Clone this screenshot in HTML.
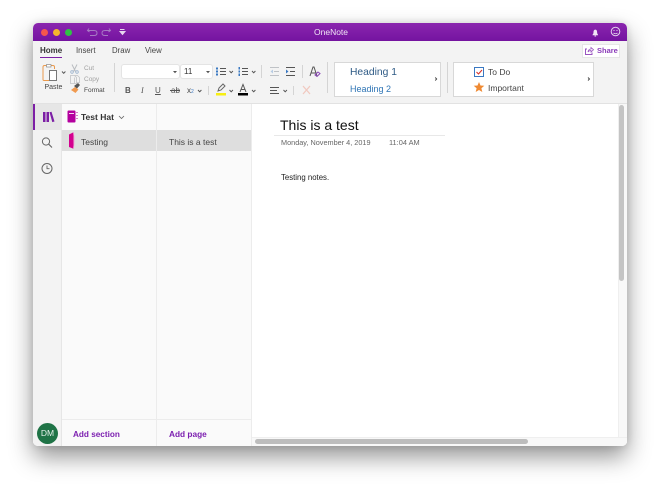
<!DOCTYPE html>
<html><head><meta charset="utf-8"><style>
html,body{margin:0;padding:0;width:660px;height:490px;overflow:hidden;background:#fff}
body{font-family:"Liberation Sans",sans-serif;position:relative}
#w{position:absolute;left:0;top:0;width:660px;height:490px;filter:blur(.3px)}
.a,.t{position:absolute}
.t{white-space:nowrap;line-height:12px;color:#444}
svg{position:absolute;overflow:visible}
</style></head><body><div id="w">
<div class="a" style="left:33px;top:23px;width:594px;height:423px;border-radius:5px;box-shadow:0 11px 24px rgba(0,0,0,.42),0 0 9px rgba(0,0,0,.12)"></div>
<div class="a" style="left:33px;top:23px;width:594px;height:423px;border-radius:5px;overflow:hidden;background:#fff">
<div class="a" style="left:0;top:0;width:594px;height:18px;background:linear-gradient(#8a25ae,#7413a0)"></div>
<div class="a" style="left:0;top:18px;width:594px;height:62px;background:#f3f3f3;border-bottom:1px solid #e2e2e2"></div>
<div class="a" style="left:0;top:81px;width:28px;height:342px;background:#f3f3f3;border-right:1px solid #e6e6e6"></div>
<div class="a" style="left:29px;top:81px;width:189px;height:342px;background:#fafafa"></div>
<div class="a" style="left:123px;top:81px;width:1px;height:342px;background:#ececec"></div>
<div class="a" style="left:218px;top:81px;width:1px;height:342px;background:#ececec"></div>
<div class="a" style="left:29px;top:396px;width:189px;height:1px;background:#ececec"></div>
<div class="a" style="left:0;top:81px;width:28px;height:26px;background:#e6e6e6"></div>
<div class="a" style="left:0;top:81px;width:2px;height:26px;background:#7c1fa5"></div>
<div class="a" style="left:29px;top:107px;width:94px;height:21px;background:#dedede"></div>
<div class="a" style="left:124px;top:107px;width:94px;height:21px;background:#dedede"></div>
<div class="a" style="left:585px;top:81px;width:9px;height:342px;background:#f8f8f8;border-left:1px solid #efefef;box-sizing:border-box"></div>
<div class="a" style="left:219px;top:414px;width:375px;height:9px;background:#f8f8f8;border-top:1px solid #efefef;box-sizing:border-box"></div>
<div class="a" style="left:586px;top:82px;width:5px;height:176px;background:#c4c4c4;border-radius:3px"></div>
<div class="a" style="left:222px;top:416px;width:273px;height:5px;background:#bdbdbd;border-radius:3px"></div>
</div>

<div class="a" style="left:41px;top:29px;width:7px;height:7px;border-radius:50%;background:#f4564d"></div>
<div class="a" style="left:53px;top:29px;width:7px;height:7px;border-radius:50%;background:#f5b42c"></div>
<div class="a" style="left:65px;top:29px;width:7px;height:7px;border-radius:50%;background:#2fc244"></div>

<div class="a" style="left:581.500px;top:44px;width:38.500px;height:13.500px;background:#fff;border:1px solid #e6e6e6;box-sizing:border-box"></div>
<div class="a" style="left:122px;top:65px;width:57px;height:13px;background:#fff;border-radius:2px;box-shadow:0 0 0 1px #e4e4e4"></div>
<div class="a" style="left:181px;top:65px;width:31px;height:13px;background:#fff;border-radius:2px;box-shadow:0 0 0 1px #e4e4e4"></div>
<div class="a" style="left:334px;top:62px;width:107px;height:35px;background:#fff;border:1px solid #d8d8d8;box-sizing:border-box"></div>
<div class="a" style="left:453px;top:62px;width:141px;height:35px;background:#fff;border:1px solid #d8d8d8;box-sizing:border-box"></div>

<svg style="left:0;top:0" width="660" height="490" fill="none">
<path d="M89 28.500 L87.500 30.500 L89.500 32 M88 30.500 H94 Q97 30.500 97 33 Q97 35.500 94 35.500 H90" stroke="#a77ac4" stroke-width="1"/>
<path d="M109 28.500 L110.500 30.500 L108.500 32 M110 30.500 H105 Q102 30.500 102 33 Q102 35.500 105 35.500 H108" stroke="#a77ac4" stroke-width="1"/>
<path d="M120 29.500h4.500M120 31.500h5l-2.500 3z" stroke="#e6d6ee" stroke-width="1" fill="#e6d6ee"/>
<path d="M592.500 35.200c0-1 1-.8 1-3.200 0-1.500 .8-2.400 1.800-2.400s1.800 .9 1.800 2.400c0 2.400 1 2.200 1 3.200z" fill="#f1e6f5"/><rect x="594.500" y="35.500" width="1.600" height="1" fill="#f1e6f5"/>
<circle cx="615.500" cy="31.500" r="4.300" stroke="#e3d2ec" stroke-width="1"/><circle cx="614" cy="30.500" r=".6" fill="#e3d2ec"/><circle cx="617" cy="30.500" r=".6" fill="#e3d2ec"/><path d="M613.500 33q2 1.500 4 0" stroke="#e3d2ec" stroke-width=".8"/>

<!-- separators -->
<path d="M114.500 63v29M261.500 65v13M302.500 65v13M327.500 62v31M447.500 62v31M208.500 86v9M293.500 86v9" stroke="#d4d4d4"/>
<!-- paste -->
<path d="M48 65.500h-3.500q-1.500 0-1.500 1.500v12.500q0 1 1 1h5" stroke="#ea9a4d" stroke-width="1"/>
<path d="M50 65.500h3q1.500 0 1.500 1.500v2" stroke="#ea9a4d" stroke-width="1"/>
<rect x="46.500" y="64.500" width="4.500" height="2.500" fill="#fff" stroke="#8a8a8a" stroke-width=".7"/>
<rect x="49.500" y="70.500" width="7" height="10" fill="#fff" stroke="#777" stroke-width="1"/>
<path d="M62 71.500l1.700 1.800 1.700-1.800" stroke="#555" stroke-width="1"/>
<!-- cut -->
<path d="M72 64.500l3.500 7M77 64.500l-3.500 7" stroke="#b9bcc0" stroke-width="1"/><circle cx="72" cy="72" r="1.300" stroke="#9db4cf" stroke-width=".8"/><circle cx="77" cy="72" r="1.300" stroke="#9db4cf" stroke-width=".8"/>
<!-- copy -->
<path d="M70.500 75.500h4l2 2v6h-6z M74.500 77.500v6M74.500 75.500h3l2 2v5h-3" stroke="#c2c4c7" stroke-width=".8"/>
<!-- format -->
<path d="M71 90l4-3 3.500 2.500-3 3.500z" fill="#f09a50"/><path d="M74 86l4-3 2 2-3 3.500z" fill="#555"/>
<!-- select chevrons -->
<path d="M173 71h4l-2 2.200zM206 71h4l-2 2.200z" fill="#555"/>
<!-- bullets -->
<path d="M220 68.500h6M220 71.500h6M220 74.500h6M242 68.500h6M242 71.500h6M242 74.500h6" stroke="#555" stroke-width="1"/>
<g fill="#3a78c2"><rect x="216" y="67.500" width="2" height="2"/><rect x="216" y="70.500" width="2" height="2"/><rect x="216" y="73.500" width="2" height="2"/><rect x="238.500" y="67" width="1.500" height="2.500"/><rect x="238.500" y="70.500" width="1.500" height="2"/><rect x="238.500" y="73.500" width="1.500" height="2.500"/></g>
<path d="M229.500 71l1.700 1.800 1.700-1.800M252 71l1.700 1.800 1.700-1.800M198 90l1.700 1.800 1.700-1.800M229.500 90l1.700 1.800 1.700-1.800M252 90l1.700 1.800 1.700-1.800M283.500 90l1.700 1.800 1.700-1.800" stroke="#555" stroke-width="1"/>
<!-- indent -->
<path d="M270 67.500h9M274 71.500h5M270 75.500h9" stroke="#bfc2c6" stroke-width="1"/><path d="M273 69.500l-2.500 2 2.500 2z" fill="#b7cce4"/>
<path d="M286 67.500h9M290 71.500h5M286 75.500h9" stroke="#555" stroke-width="1"/><path d="M286 69.500l2.500 2-2.500 2z" fill="#3a78c2"/>
<!-- clear format A -->
<path d="M310 76l3-9h1l3 9M311 73h5" stroke="#555" stroke-width="1"/><path d="M315 75l3-3 2 1.500-3 3z" stroke="#8a45b8" stroke-width="1"/>
<!-- B I U row -->
<path d="M170 90.500h10" stroke="#555" stroke-width="1"/>
<rect x="216" y="93" width="10" height="2.500" fill="#f7ee12"/><path d="M218 91l1-3 4-4 2 2-4 4z" stroke="#666" stroke-width="1"/>
<rect x="238" y="93" width="10" height="2.500" fill="#000"/><path d="M240 92l3-7.500 3 7.500M241 89.500h4" stroke="#555" stroke-width="1"/>
<path d="M270 87.500h9M270 90.500h7M270 93.500h9" stroke="#555" stroke-width="1"/>
<path d="M303 86l7 8M310 86l-7 8" stroke="#f1c9c0" stroke-width="1.300"/>
<!-- share -->
<path d="M587 49h-1.500v5.500h6.500v-2" stroke="#9a55c0" stroke-width="1"/><path d="M588 52q.5-3 3-3v-1.500l2.500 2.300-2.500 2.200v-1.500q-2 0-3 1.500z" stroke="#9a55c0" stroke-width=".8"/>
<!-- arrows -->
<path d="M435.200 77.500l1.500 1.500-1.500 1.500M588 77.500l1.500 1.500-1.500 1.500" stroke="#444" stroke-width=".9"/>
<!-- todo -->
<rect x="474.500" y="67.500" width="9" height="9" fill="#fff" stroke="#3a78c2" stroke-width="1"/><path d="M476.500 72l2 2 3.500-4" stroke="#d8322a" stroke-width="1.100"/>
<path d="M479 82l1.500 3.500 3.800.3-2.900 2.500.9 3.700-3.300-2-3.300 2 .9-3.700-2.900-2.500 3.800-.3z" fill="#ef8a33"/>
<!-- rail -->
<path d="M43 112h2.500v10H43zM46.500 112H49v10h-2.500z" fill="#7c1fa5"/><path d="M49.500 112.300l2-.6 3 9.800-2.200.6z" fill="#7c1fa5"/>
<circle cx="46" cy="141.500" r="3.600" stroke="#666" stroke-width="1"/><path d="M48.700 144.200l3.300 3.300" stroke="#666" stroke-width="1.100"/>
<circle cx="47" cy="168.500" r="5" stroke="#666" stroke-width="1"/><path d="M47 165.500v3.200h2.500" stroke="#666" stroke-width=".9"/>
<!-- notebook -->
<rect x="67.500" y="110.500" width="8" height="12" rx="1" fill="#b4009e"/><rect x="69" y="113" width="5" height="1" fill="#f6d5f0"/><path d="M77 112v1M77 115v1M77 118v1" stroke="#b4009e"/>
<path d="M119 116l2.500 2.500 2.500-2.500" stroke="#666" stroke-width=".8"/>
<!-- section tab -->
<path d="M69 134.500l4.500-2.300v16.600l-4.500-1.800z" fill="#d3008f"/><path d="M73.500 132.500q1.200 8 0 16" stroke="#f3a3d9" stroke-width=".8"/>
<path d="M274 135.500h171" stroke="#e8e8e8"/>
</svg>

<div class="t" style="left:314px;top:26px;font-size:8.500px;color:#f0e4f5">OneNote</div>
<div class="t" style="left:40px;top:45px;font-size:8px;font-weight:bold;color:#333">Home</div>
<div class="a" style="left:40px;top:56.500px;width:22px;height:1.500px;background:#7c1fa5"></div>
<div class="t" style="left:76px;top:45px;font-size:7.800px;color:#444">Insert</div>
<div class="t" style="left:112px;top:45px;font-size:7.800px;color:#444">Draw</div>
<div class="t" style="left:145px;top:45px;font-size:7.800px;color:#444">View</div>
<div class="t" style="left:597px;top:44.500px;font-size:7.500px;font-weight:bold;color:#8a3ab8">Share</div>

<div class="t" style="left:44.500px;top:82px;font-size:7px">Paste</div>
<div class="t" style="left:84px;top:63px;font-size:6.500px;color:#a2a2a2">Cut</div>
<div class="t" style="left:84px;top:74px;font-size:6.500px;color:#a2a2a2">Copy</div>
<div class="t" style="left:84px;top:85px;font-size:6.500px;color:#444">Format</div>

<div class="t" style="left:184px;top:66px;font-size:8px;color:#333">11</div>
<div class="t" style="left:125px;top:85px;font-size:8px;font-weight:bold;color:#555">B</div>
<div class="t" style="left:141px;top:85px;font-size:8px;font-style:italic;font-family:'Liberation Serif',serif;color:#555">I</div>
<div class="t" style="left:155px;top:85px;font-size:8px;color:#555;text-decoration:underline">U</div>
<div class="t" style="left:171px;top:85px;font-size:8px;color:#555">ab</div>
<div class="t" style="left:187px;top:85px;font-size:8px;color:#444">x<span style="font-size:5px;color:#3a78c2">2</span></div>

<div class="t" style="left:350px;top:67px;font-size:10.300px;color:#2e5a85">Heading 1</div>
<div class="t" style="left:350px;top:83px;font-size:9px;color:#2f75b5">Heading 2</div>
<div class="t" style="left:488px;top:66px;font-size:8.500px;color:#444">To Do</div>
<div class="t" style="left:488px;top:82px;font-size:8.500px;color:#444">Important</div>

<div class="t" style="left:81px;top:111px;font-size:8.500px;font-weight:bold;color:#333">Test Hat</div>
<div class="t" style="left:81px;top:135.500px;font-size:8.500px;color:#444">Testing</div>
<div class="t" style="left:169px;top:135.500px;font-size:8.500px;color:#444">This is a test</div>
<div class="t" style="left:73px;top:429px;font-size:8.200px;font-weight:bold;color:#7c1fb0">Add section</div>
<div class="t" style="left:169px;top:428px;font-size:8.300px;font-weight:bold;color:#7c1fb0">Add page</div>
<div class="a" style="left:37px;top:423px;width:21px;height:21px;border-radius:50%;background:#1f7346;color:#e8f2ec;font-size:8.500px;line-height:21px;text-align:center">DM</div>

<div class="t" style="left:280px;top:117px;font-size:14px;line-height:17px;color:#111">This is a test</div>
<div class="t" style="left:281px;top:137px;font-size:7.300px;color:#666">Monday, November 4, 2019</div>
<div class="t" style="left:389px;top:137px;font-size:7.400px;color:#666">11:04 AM</div>
<div class="t" style="left:281px;top:172px;font-size:7.800px;color:#222">Testing notes.</div>
</div></body></html>
